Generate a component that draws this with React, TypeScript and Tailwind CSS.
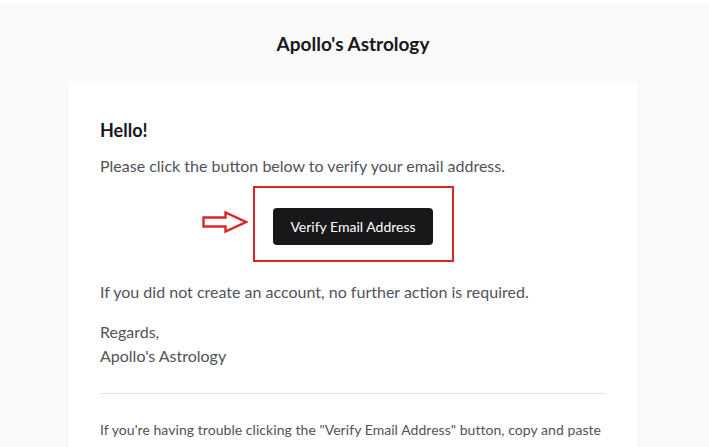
export default function App() {
  return (
    <div
      className="min-h-screen bg-[#fafafa] border-t-4 border-white text-[#52525b]"
      style={{ fontFamily: 'Lato, "Noto Sans", sans-serif' }}
    >
      <header className="h-[79px] flex items-center justify-center pr-[3px]">
        <h2 className="text-[19px] font-bold text-[#18181b] leading-none">Apollo's Astrology</h2>
      </header>

      <div className="w-[570px] ml-[68px] bg-white rounded-[4px] shadow-[0_1px_3px_rgba(0,0,0,0.06)] px-8 pt-[34px] pb-6">
        <h1 className="text-[18px] font-bold text-[#18181b] leading-[27px]">Hello!</h1>
        <p className="mt-[10px] text-base leading-6">Please click the button below to verify your email address.</p>

        <div className="mt-[8px] flex justify-center">
          <div className="relative">
            <svg
              className="absolute left-[-51px] top-[25px]"
              width="46"
              height="22"
              viewBox="0 0 46 22"
              fill="none"
            >
              <path
                d="M1.5 6.5 H23.5 V1.5 L44 11 L23.5 20.5 V15.5 H1.5 Z"
                stroke="#dc2626"
                strokeWidth="2.4"
                strokeLinejoin="miter"
              />
            </svg>
            <div className="border-2 border-[#dc2626] w-[201px] h-[76px] flex justify-center pt-[20px]">
              <a
                href="#"
                className="bg-[#18181b] text-white text-[14px] rounded-[4px] w-[160px] h-[37px] flex items-center justify-center"
              >
                Verify Email Address
              </a>
            </div>
          </div>
        </div>

        <p className="mt-[18px] text-base leading-6">If you did not create an account, no further action is required.</p>
        <p className="mt-[16px] text-base leading-6">
          Regards,
          <br />
          Apollo's Astrology
        </p>

        <div className="mt-[25px] border-t border-[#e4e4e7]" />

        <p className="mt-[25px] text-[14px] leading-[22px] tracking-[0.05px]">
          If you're having trouble clicking the "Verify Email Address" button, copy and paste the URL below into your web browser:{' '}
          <span className="break-all">http://localhost/email/verify/1/8a2f3b0c1d9e4f5a6b7c8d9e0f1a2b3c4d5e6f7a</span>
        </p>
      </div>
    </div>
  );
}
